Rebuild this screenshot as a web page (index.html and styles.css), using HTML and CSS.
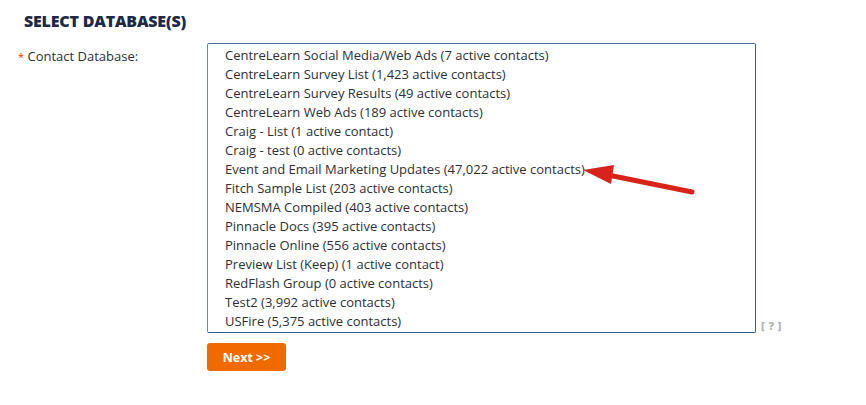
FILE: index.html
```html
<!DOCTYPE html>
<html>
<head>
<meta charset="utf-8">
<link rel="stylesheet" href="styles.css">
</head>
<body>
<div class="page">
  <h2 class="title">SELECT DATABASE(S)</h2>
  <div class="row">
    <div class="label"><span class="req">*</span> Contact Database:</div>
    <div class="field">
      <div class="select-wrap">
        <div class="listbox">
          <div class="opt">CentreLearn Social Media/Web Ads (7 active contacts)</div>
          <div class="opt">CentreLearn Survey List (1,423 active contacts)</div>
          <div class="opt">CentreLearn Survey Results (49 active contacts)</div>
          <div class="opt">CentreLearn Web Ads (189 active contacts)</div>
          <div class="opt">Craig - List (1 active contact)</div>
          <div class="opt">Craig - test (0 active contacts)</div>
          <div class="opt">Event and Email Marketing Updates (47,022 active contacts)</div>
          <div class="opt">Fitch Sample List (203 active contacts)</div>
          <div class="opt">NEMSMA Compiled (403 active contacts)</div>
          <div class="opt">Pinnacle Docs (395 active contacts)</div>
          <div class="opt">Pinnacle Online (556 active contacts)</div>
          <div class="opt">Preview List (Keep) (1 active contact)</div>
          <div class="opt">RedFlash Group (0 active contacts)</div>
          <div class="opt">Test2 (3,992 active contacts)</div>
          <div class="opt">USFire (5,375 active contacts)</div>
        </div>
        <span class="help">[ ? ]</span>
      </div>
      <button class="next">Next &gt;&gt;</button>
    </div>
  </div>
</div>
<svg class="arrow" width="866" height="405" viewBox="0 0 866 405">
  <line x1="692" y1="192" x2="608" y2="175" stroke="#d8231b" stroke-width="5" stroke-linecap="round"/>
  <polygon points="583,170 614,165 611,184" fill="#d8231b"/>
</svg>
</body>
</html>
```
FILE: styles.css
```css
html, body {
  margin: 0;
  padding: 0;
  background: #ffffff;
}
body {
  font-family: "Open Sans", "Liberation Sans", sans-serif;
  color: #2b2f36;
  position: relative;
  width: 866px;
  height: 405px;
  overflow: hidden;
}
.page {
  padding: 10px 0 0 18px;
}
.title {
  margin: 0 0 0 6px;
  font-size: 16px;
  font-weight: 800;
  color: #1b2a47;
  line-height: 22px;
  letter-spacing: -0.2px;
}
.row {
  display: flex;
  margin-top: 11px;
}
.label {
  width: 189px;
  font-size: 13px;
  line-height: 19px;
  padding-top: 4px;
  color: #2b2f36;
}
.req {
  color: #e0302a;
  font-size: 11px;
}
.field {
  display: flex;
  flex-direction: column;
  align-items: flex-start;
}
.select-wrap {
  display: flex;
  align-items: flex-end;
}
.listbox {
  width: 530px;
  border: 1px solid #2a5d93;
  border-left-color: #6f87a3;
  border-top-color: #4b6d94;
  border-radius: 2px;
  padding: 2px 0 1px 17px;
  font-size: 13px;
  line-height: 19px;
  color: #2b2f36;
}
.opt {
  white-space: nowrap;
}
.help {
  margin-left: 5px;
  font-size: 11px;
  font-weight: 800;
  color: #aeb2b8;
  line-height: 14px;
  margin-bottom: 0;
  word-spacing: 1px;
}
.next {
  margin-top: 10px;
  width: 79px;
  height: 28px;
  border: none;
  border-radius: 3px;
  background: #f06a00;
  color: #ffffff;
  font-family: "Open Sans", "Liberation Sans", sans-serif;
  font-weight: 700;
  font-size: 12.5px;
  padding: 0;
  cursor: pointer;
}
.arrow {
  position: absolute;
  left: 0;
  top: 0;
  pointer-events: none;
}
```
